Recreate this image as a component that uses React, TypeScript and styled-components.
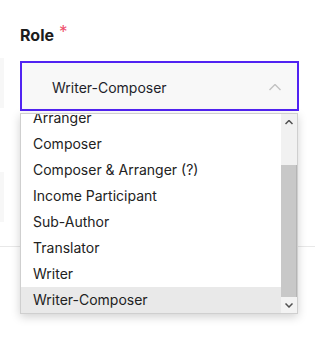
import React, { useLayoutEffect, useRef } from 'react';
import styled, { createGlobalStyle } from 'styled-components';

const GlobalStyle = createGlobalStyle`
	body {
		margin: 0;
		background: #ffffff;
		font-family: Inter, 'Liberation Sans', sans-serif;
		color: #222222;
	}
`;

const Page = styled.div`
	width: 315px;
	height: 342px;
	overflow: hidden;
	background: #ffffff;
`;

const Row = styled.div`
	display: flex;
`;

const Sliver = styled.div`
	width: 4px;
	display: flex;
	flex-direction: column;
	gap: 64px;
	padding-top: 58px;
`;

const SliverBlock = styled.div`
	height: 50px;
	background: #f7f7f7;
`;

const Main = styled.div`
	flex: 1;
	padding: 22px 16px 0 16px;
`;

const Label = styled.div`
	font-size: 16px;
	line-height: 20px;
	font-weight: 700;
	color: #1c1c1c;
`;

const Required = styled.span`
	color: #ee4f6c;
	font-weight: 400;
	margin-left: 5px;
	vertical-align: 3px;
	font-size: 17px;
`;

const Field = styled.div`
	position: relative;
	margin-top: 16px;
`;

const SelectBox = styled.div`
	box-sizing: border-box;
	height: 50px;
	border: 2px solid #5123f2;
	background: #f8f8f8;
	display: flex;
	align-items: center;
	justify-content: space-between;
	padding: 3px 16px 0 30px;
	font-size: 14px;
	color: #1e1e2a;
`;

const Divider = styled.div`
	margin-top: 24px;
	height: 1px;
	background: #e8e8e8;
`;

const Dropdown = styled.div`
	position: absolute;
	top: calc(100% + 2px);
	left: 0;
	width: 278px;
	height: 201px;
	box-sizing: border-box;
	border: 1px solid #cfcfcf;
	background: #ffffff;
	box-shadow: 0 3px 9px rgba(0, 0, 0, 0.18);
	display: flex;
`;

const Options = styled.ul`
	flex: 1;
	margin: 0;
	padding: 0;
	list-style: none;
	overflow-y: scroll;
	scrollbar-width: none;
	&::-webkit-scrollbar {
		display: none;
	}
`;

const Option = styled.li<{ $active?: boolean }>`
	height: 26px;
	line-height: 26px;
	padding-left: 12px;
	font-size: 14px;
	color: #222222;
	background: ${(p) => (p.$active ? '#e9e9e9' : 'transparent')};
	white-space: nowrap;
`;

const Rail = styled.div`
	width: 16px;
	display: flex;
	flex-direction: column;
	background: #f1f1f1;
`;

const RailButton = styled.div<{ $light?: boolean }>`
	height: 16px;
	display: flex;
	align-items: center;
	justify-content: center;
	background: ${(p) => (p.$light ? '#f3f3f3' : '#f1f1f1')};
`;

const Track = styled.div`
	flex: 1;
	display: flex;
	flex-direction: column;
	justify-content: flex-end;
`;

const Thumb = styled.div`
	height: 132px;
	background: #c8c8c8;
	border-right: 1px solid #b5b5b5;
`;

const roles = [
	'Adapter',
	'Arranger',
	'Composer',
	'Composer & Arranger (?)',
	'Income Participant',
	'Sub-Author',
	'Translator',
	'Writer',
	'Writer-Composer',
];

function Chevron({ up, size, color, width }: { up: boolean; size: number; color: string; width: number }) {
	const h = size / 2;
	return (
		<svg width={size} height={h + 1} viewBox={`0 0 ${size} ${h + 1}`}>
			<polyline
				points={up ? `0.5,${h} ${size / 2},0.5 ${size - 0.5},${h}` : `0.5,0.5 ${size / 2},${h} ${size - 0.5},0.5`}
				fill="none"
				stroke={color}
				strokeWidth={width}
			/>
		</svg>
	);
}

function App() {
	const listRef = useRef<HTMLUListElement>(null);
	const selected = 'Writer-Composer';

	useLayoutEffect(() => {
		if (listRef.current) listRef.current.scrollTop = listRef.current.scrollHeight;
	}, []);

	return (
		<Page>
			<GlobalStyle />
			<Row>
				<Sliver>
					<SliverBlock />
					<SliverBlock />
				</Sliver>
				<Main>
					<Label>
						Role<Required>*</Required>
					</Label>
					<Field>
						<SelectBox>
							<span>{selected}</span>
							<Chevron up size={12} color="#c2c2c2" width={1.4} />
						</SelectBox>
						<Dropdown>
							<Options ref={listRef}>
								{roles.map((role) => (
									<Option key={role} $active={role === selected}>
										{role}
									</Option>
								))}
							</Options>
							<Rail>
								<RailButton>
									<Chevron up size={8} color="#505050" width={1.5} />
								</RailButton>
								<Track>
									<Thumb />
								</Track>
								<RailButton $light>
									<Chevron up={false} size={8} color="#505050" width={1.5} />
								</RailButton>
							</Rail>
						</Dropdown>
					</Field>
				</Main>
			</Row>
			<Divider />
		</Page>
	);
}

export default App;
